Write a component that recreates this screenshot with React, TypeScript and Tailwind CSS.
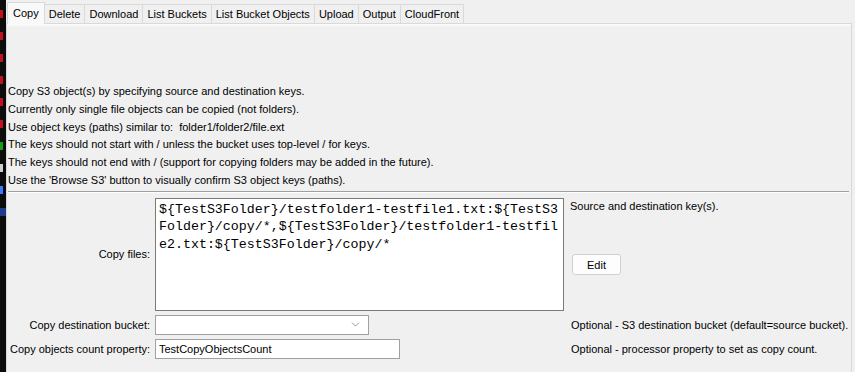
import React from "react";
import { ChevronDown } from "lucide-react";

const tabs = ["Copy", "Delete", "Download", "List Buckets", "List Bucket Objects", "Upload", "Output", "CloudFront"];

const notes = [
  "Copy S3 object(s) by specifying source and destination keys.",
  "Currently only single file objects can be copied (not folders).",
  "Use object keys (paths) similar to:  folder1/folder2/file.ext",
  "The keys should not start with / unless the bucket uses top-level / for keys.",
  "The keys should not end with / (support for copying folders may be added in the future).",
  "Use the 'Browse S3' button to visually confirm S3 object keys (paths).",
];

const copyFiles =
  "${TestS3Folder}/testfolder1-testfile1.txt:${TestS3Folder}/copy/*,${TestS3Folder}/testfolder1-testfile2.txt:${TestS3Folder}/copy/*";

const App = () => {
  return (
    <div className="flex w-[855px] h-[372px] overflow-hidden bg-[#f0f0f0] text-[11px] text-black font-['Liberation_Sans',sans-serif]">
      {/* terminal window behind */}
      <div className="w-[6px] bg-[#0c0c0c] flex flex-col gap-[14px] pt-[10px]">
        <div className="h-[8px] w-[3px] bg-[#c50f1f]" />
        <div className="h-[8px] w-[3px] bg-[#c50f1f]" />
        <div className="h-[8px] w-[3px] bg-[#c50f1f]" />
        <div className="h-[8px] w-[3px] bg-[#c50f1f]" />
        <div className="h-[8px] w-[3px] bg-[#c50f1f]" />
        <div className="h-[8px] w-[3px] bg-[#c50f1f]" />
        <div className="h-[8px] w-[3px] bg-[#13a10e]" />
        <div className="h-[8px] w-[3px] bg-[#cccccc]" />
        <div className="h-[8px] w-[3px] bg-[#3b78ff]" />
        <div className="h-[8px] w-[6px] bg-[#1e3a8a]" />
      </div>

      <div className="flex-1 flex flex-col pt-[2px] pr-[3px]">
        <div className="flex items-end h-[21px] pl-[1px]">
          {tabs.map((t, i) =>
            i === 0 ? (
              <div key={t} className="h-[22px] px-[5px] flex items-center bg-[#f9f9f9] border border-b-0 border-[#d9d9d9] relative top-[1px] z-10">
                {t}
              </div>
            ) : (
              <div key={t} className="h-[19px] px-[4px] flex items-center bg-[#f0f0f0] border border-l-0 border-b-0 border-[#d9d9d9]">
                {t}
              </div>
            )
          )}
        </div>

        <div className="flex-1 border border-b-0 border-[#d9d9d9] bg-[#f0f0f0] shadow-[inset_0_2px_0_#f9f9f9]">
          <div className="pt-[59px] pl-[1px] leading-[17.8px]">
            {notes.map((n) => (
              <div key={n} className="whitespace-pre">{n}</div>
            ))}
          </div>

          <div className="mt-[1px] ml-[1px] mr-[2px] h-[2px] border-t border-[#a0a0a0] border-b border-b-white" />

          <div className="grid grid-cols-[143px_409px_1fr] gap-x-[5px] mt-[5px] items-center">
            <div className="text-right">Copy files:</div>
            <div className="h-[113px] bg-white border border-[#7a7a7a] px-[3px] pt-[2px] font-['Liberation_Mono',monospace] text-[13.3px] leading-[17.6px] break-all overflow-hidden">
              {copyFiles}
            </div>
            <div className="self-stretch flex flex-col pl-[1px]">
              <div>Source and destination key(s).</div>
              <button className="mt-[40px] w-[49px] h-[21px] ml-[2px] bg-[#fdfdfd] border border-[#d0d0d0] rounded-[3px] text-[11px]">
                Edit
              </button>
            </div>

            <div className="text-right mt-[4px] whitespace-nowrap">Copy destination bucket:</div>
            <div className="mt-[4px] flex">
              <div className="w-[214px] h-[20px] bg-white border border-[#a0a0a0] flex items-center justify-end pr-[6px]">
                <ChevronDown size={13} strokeWidth={1.2} className="text-[#606060]" />
              </div>
            </div>
            <div className="mt-[4px] pl-[2px] whitespace-nowrap">Optional - S3 destination bucket (default=source bucket).</div>

            <div className="text-right mt-[4px] whitespace-nowrap">Copy objects count property:</div>
            <div className="mt-[4px] flex">
              <div className="w-[245px] h-[20px] bg-white border border-[#a0a0a0] flex items-center px-[3px]">
                TestCopyObjectsCount
              </div>
            </div>
            <div className="mt-[4px] pl-[2px] whitespace-nowrap">Optional - processor property to set as copy count.</div>
          </div>
        </div>
      </div>
    </div>
  );
};

export default App;
